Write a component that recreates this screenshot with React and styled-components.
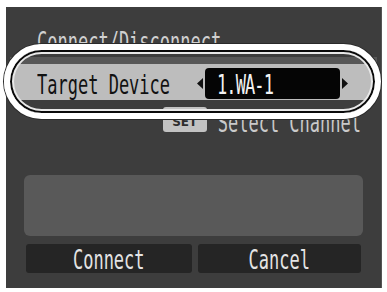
import React from 'react'
import styled, { createGlobalStyle } from 'styled-components'

const GlobalStyle = createGlobalStyle`
  html, body {
    margin: 0;
    padding: 0;
    background: #ffffff;
  }
  body {
    font-family: "DejaVu Sans Mono", "Liberation Mono", monospace;
  }
`

const Screen = styled.div`
  position: relative;
  box-sizing: border-box;
  width: 376px;
  height: 281px;
  margin: 7px 0 0 6px;
  padding: 0 18px;
  display: flex;
  flex-direction: column;
  background: #3d3d3d;
  border-right: 1px solid #555;
`

// tall, narrow camera-menu lettering
const Lcd = styled.span`
  display: inline-block;
  font-family: "DejaVu Sans Mono", "Liberation Mono", monospace;
  font-size: 17px;
  line-height: 20px;
  height: 20px;
  white-space: nowrap;
  letter-spacing: ${props => props.$tight ? '-0.9px' : '0'};
  color: ${props => props.$color || '#d2d2d2'};
  transform: scaleY(1.6);
`

const Title = styled.div`
  margin-top: 24px;
  padding-left: 13px;
  height: 20px;
`

const SettingRow = styled.div`
  margin: 6px -14px 0;
  height: 33px;
  padding: 3px 0 0 27px;
  box-sizing: content-box;
  display: flex;
  align-items: center;
  background: #bdbdbd;
  border-top: 7px solid #575757;
`

const Label = styled.div`
  width: 160px;
`

const Arrow = styled.svg`
  width: 6px;
  height: 11px;
  flex: none;
`

const ValueBox = styled.div`
  width: 135px;
  height: 31px;
  margin: 0 2px;
  padding-left: 12px;
  box-sizing: border-box;
  display: flex;
  align-items: center;
  background: #050505;
  border-radius: 4px;
`

const HintRow = styled.div`
  margin-top: 7px;
  height: 25px;
  display: flex;
  align-items: flex-end;
  justify-content: flex-end;
  gap: 11px;
  padding-right: 2px;
`

const SetKey = styled.div`
  width: 44px;
  height: 25px;
  box-sizing: border-box;
  display: flex;
  align-items: flex-end;
  justify-content: center;
  padding-bottom: 3px;
  background: #c2c2c2;
  border-radius: 3px;
  font-family: "DejaVu Sans", sans-serif;
  font-weight: bold;
  font-size: 12px;
  color: #2e2e2e;
`

const MessageBox = styled.div`
  margin-top: 43px;
  height: 61px;
  background: #595959;
  border-radius: 6px;
`

const ButtonRow = styled.div`
  margin-top: 8px;
  padding: 0 2px;
  display: flex;
  gap: 6px;
`

const Button = styled.div`
  flex: ${props => props.$grow || 1};
  height: 29px;
  display: flex;
  align-items: center;
  justify-content: center;
  background: #252525;
  border-radius: 3px;
`

// the hand-drawn highlight ring laid over the setting row
const Highlight = styled.div`
  position: absolute;
  left: -2px;
  top: 37px;
  width: 377px;
  height: 75px;
  box-sizing: border-box;
  border: 6px solid #ffffff;
  border-radius: 38px;
  box-shadow: 0 0 0 1px #2a2a2a, inset 0 0 0 2px #0a0a0a, inset 0 0 0 4px #e8e8e8;
  pointer-events: none;
`

const LeftArrow = () => (
  <Arrow viewBox='0 0 6 11'>
    <polygon points='6,0 0,5.5 6,11' fill='#111' />
  </Arrow>
)

const RightArrow = () => (
  <Arrow viewBox='0 0 6 11'>
    <polygon points='0,0 6,5.5 0,11' fill='#111' />
  </Arrow>
)

export default function App () {
  return (
    <>
      <GlobalStyle />
      <Screen>
        <Title>
          <Lcd $color='#d0d0d0'>Connect/Disconnect</Lcd>
        </Title>
        <SettingRow>
          <Label>
            <Lcd $color='#111'>Target Device</Lcd>
          </Label>
          <LeftArrow />
          <ValueBox>
            <Lcd $color='#f2f2f2' $tight>1.WA-1</Lcd>
          </ValueBox>
          <RightArrow />
        </SettingRow>
        <HintRow>
          <SetKey>SET</SetKey>
          <Lcd $color='#cacaca'>Select Channel</Lcd>
        </HintRow>
        <MessageBox />
        <ButtonRow>
          <Button $grow={166}>
            <Lcd $color='#e4e4e4'>Connect</Lcd>
          </Button>
          <Button $grow={164}>
            <Lcd $color='#e4e4e4'>Cancel</Lcd>
          </Button>
        </ButtonRow>
        <Highlight />
      </Screen>
    </>
  )
}
